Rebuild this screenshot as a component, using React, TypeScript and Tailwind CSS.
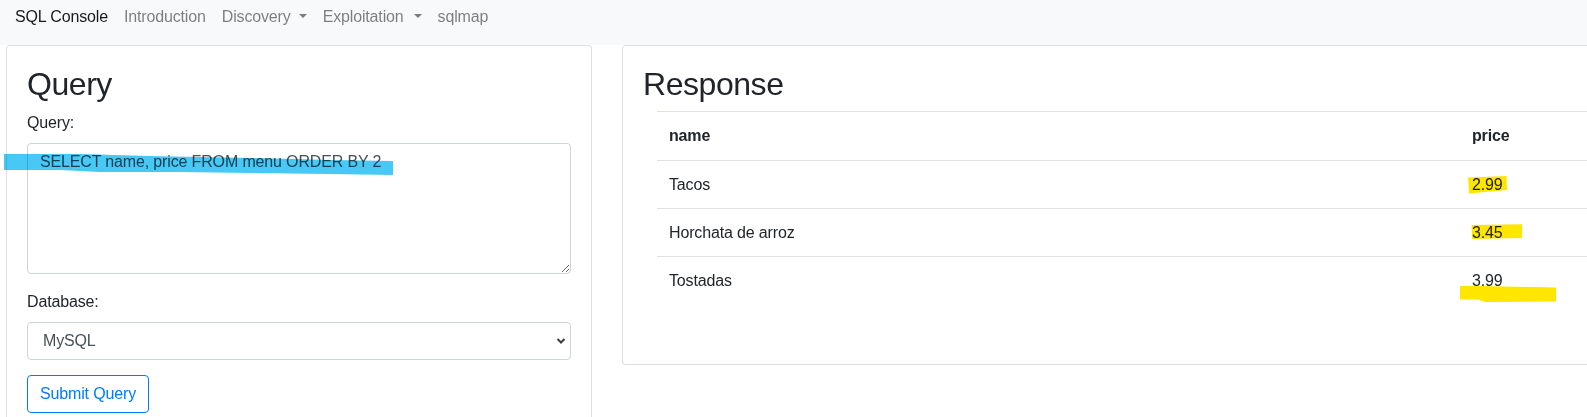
import { useState } from 'react';

const rows = [
  { name: 'Tacos', price: '2.99' },
  { name: 'Horchata de arroz', price: '3.45' },
  { name: 'Tostadas', price: '3.99' },
];

function Caret({ className }: { className: string }) {
  return (
    <span className={`inline-block align-[0.255em] w-0 h-0 border-t-[4.8px] border-x-[4.8px] border-x-transparent ${className}`} />
  );
}

function Navbar() {
  return (
    <nav className="h-[45px] bg-[#f8f9fa] flex items-start pl-[15px] pt-[5px] leading-6 text-[16px]">
      <a className="text-black/90">SQL Console</a>
      <a className="ml-[16px] text-black/50">Introduction</a>
      <a className="ml-[16px] text-black/50">
        Discovery
        <Caret className="ml-[8px]" />
      </a>
      <a className="ml-[16px] text-black/50">
        Exploitation
        <Caret className="ml-[10px]" />
      </a>
      <a className="ml-[16px] text-black/50">sqlmap</a>
    </nav>
  );
}

function QueryCard() {
  const [query, setQuery] = useState('SELECT name, price FROM menu ORDER BY 2');
  const [db, setDb] = useState('mysql');

  return (
    <div className="w-[586px] shrink-0 bg-white border border-black/[.125] rounded-[4px] px-5 pt-[19px] pb-5">
      <h2 className="text-[32px] leading-[1.2] mb-2 font-normal tracking-[-0.45px]">Query</h2>
      <label className="block mb-2">Query:</label>
      <textarea
        value={query}
        onChange={(e) => setQuery(e.target.value)}
        className="block w-full h-[131px] px-3 py-[6px] border border-[#ced4da] rounded-[4px] text-[#495057] leading-6 resize-y outline-none"
      />
      <label className="block mt-4 mb-2">Database:</label>
      <div className="relative">
        <select
          value={db}
          onChange={(e) => setDb(e.target.value)}
          className="block w-full h-[38px] appearance-none pl-[15px] pr-8 border border-[#ced4da] rounded-[4px] text-[#495057] bg-white outline-none"
        >
          <option value="mysql">MySQL</option>
          <option value="sqlite">SQLite</option>
          <option value="postgres">PostgreSQL</option>
        </select>
        <svg
          className="absolute right-[5px] top-[15px] pointer-events-none"
          width="10"
          height="8"
          viewBox="0 0 10 8"
        >
          <path d="M1.5 2 L5 5.5 L8.5 2" fill="none" stroke="#3c4043" strokeWidth="2" />
        </svg>
      </div>
      <button className="mt-[15px] px-3 py-[6px] leading-6 border border-[#007bff] text-[#007bff] rounded-[4px] bg-white">
        Submit Query
      </button>
    </div>
  );
}

function ResponseCard() {
  return (
    <div className="w-[1000px] shrink-0 ml-[30px] bg-white border border-black/[.125] rounded-[4px] px-5 pt-[19px] pb-5">
      <h2 className="text-[32px] leading-[1.2] mb-2 font-normal tracking-[-0.45px]">Response</h2>
      <table className="ml-[14px] mb-[40px] w-[960px] border-collapse text-left">
        <thead>
          <tr className="border-t border-[#dee2e6]">
            <th className="w-[803px] px-3 py-3 font-bold">name</th>
            <th className="px-3 py-3 font-bold">price</th>
          </tr>
        </thead>
        <tbody>
          {rows.map((r) => (
            <tr key={r.name} className="border-t border-[#dee2e6]">
              <td className="px-3 py-[11.5px]">{r.name}</td>
              <td className="px-3 py-[11.5px]">{r.price}</td>
            </tr>
          ))}
        </tbody>
      </table>
    </div>
  );
}

// marker strokes drawn on top of the screenshot
function Highlights() {
  return (
    <svg className="absolute left-0 top-0 pointer-events-none mix-blend-multiply" width="1587" height="417">
      <path
        d="M4 154 L80 154 L150 156 L250 158 L330 160 L393 161 L393 175 L330 174 L250 173 L180 172 L100 172 L60 170 L4 170 Z"
        fill="#47c8f5"
      />
      <path d="M1468 177.5 L1506.5 176 L1507 190 L1469 193.5 Z" fill="#ffe600" />
      <path d="M1471.5 225 L1522 224.3 L1522 238 L1472 239 Z" fill="#ffe600" />
      <path d="M1460 286 L1480 286 L1556 287.5 L1556 301.5 L1485 302 L1478 299.5 L1460 299.5 Z" fill="#ffe600" />
    </svg>
  );
}

export default function App() {
  return (
    <div className="relative h-screen w-full overflow-hidden bg-white text-[#212529] text-[16px] leading-6 tracking-[-0.15px] font-['Liberation_Sans',Arial,sans-serif]">
      <Navbar />
      <div className="flex items-start pl-[6px]">
        <QueryCard />
        <ResponseCard />
      </div>
      <Highlights />
    </div>
  );
}
